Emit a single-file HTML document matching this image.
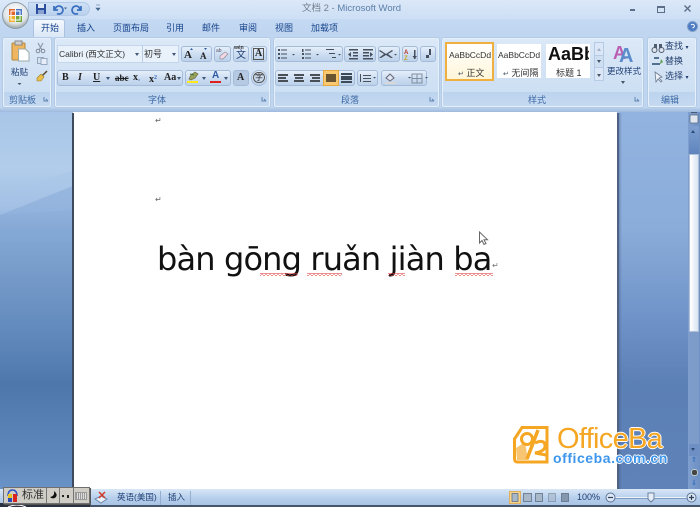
<!DOCTYPE html>
<html><head><meta charset="utf-8">
<style>
html,body{margin:0;padding:0}
body{width:700px;height:507px;overflow:hidden;position:relative;background:#fff;font-family:"Liberation Sans","Noto Sans CJK SC",sans-serif;}
.a,.t{position:absolute}
.t{white-space:nowrap;color:#15428b;font-size:9px;line-height:12px}
.k{color:#333}
.box{position:absolute;border:1px solid #a4bcd9;border-radius:3px;background:linear-gradient(#e6effa,#cfdff2 45%,#bcd1ea);box-sizing:border-box}
.grp{position:absolute;top:37px;height:71px;border:1px solid #b4cbe6;border-radius:3px;box-sizing:border-box;background:linear-gradient(#dbe8f7,#cddff3 78%,#bcd3ee 78%,#c6daf1);box-shadow:inset 0 0 0 1px #e6f0fb}
.gl{position:absolute;top:94px;text-align:center;font-size:9px;line-height:12px;color:#3e6aa5;white-space:nowrap}
.tab{position:absolute;top:22px;font-size:9px;line-height:12px;color:#15428b;white-space:nowrap}
.ic{position:absolute;font-size:9px;line-height:12px;color:#222;white-space:nowrap;text-align:center}
.sty{position:absolute;background:#fff;text-align:center;overflow:hidden;box-sizing:border-box}
.dd{position:absolute;border:2px solid transparent;border-top:3px solid #3f5777;border-bottom:0}
</style></head><body>

<!-- title -->
<div class="a" style="left:0;top:0;width:700px;height:19px;background:linear-gradient(#dbe8f8,#cddff5)"></div>
<div class="a" style="left:0;top:19px;width:700px;height:18px;background:linear-gradient(#c4d9f2,#bfd5f0)"></div>
<div class="a" style="left:0;top:35px;width:700px;height:74px;background:#bfd5f0"></div>
<div class="a" style="left:0;top:108px;width:700px;height:4px;background:linear-gradient(#bad0ec,#9db9dd)"></div>

<!-- QAT -->
<div class="a" style="left:28px;top:2px;width:62px;height:14px;border-radius:0 9px 9px 0;background:linear-gradient(#cfe0f5,#b9d1ee);border:1px solid #b3cae6;box-sizing:border-box"></div>
<svg class="a" style="left:0;top:0" width="105" height="36" viewBox="0 0 105 36">
 <defs><radialGradient id="o" cx="50%" cy="35%" r="65%"><stop offset="0" stop-color="#fff"/><stop offset=".7" stop-color="#dfe4e6"/><stop offset="1" stop-color="#9aa4a8"/></radialGradient></defs>
 <circle cx="15.500" cy="15.500" r="13" fill="url(#o)" stroke="#8a9aa6"/>
 <rect x="9" y="9" width="6" height="6" fill="#e2632b"/><rect x="16" y="9" width="6" height="6" fill="#4a78c4"/>
 <rect x="9" y="16" width="6" height="6" fill="#efb02e"/><rect x="16" y="16" width="6" height="6" fill="#74a93c"/>
 <rect x="11" y="11" width="9" height="9" fill="none" stroke="#fff" stroke-width="1"/>
 <rect x="36" y="4" width="10" height="10" fill="#2b4f9c"/><rect x="38" y="4" width="6" height="4" fill="#dfe8f5"/><rect x="38" y="10" width="6" height="4" fill="#8aa2cf"/>
 <path d="M54 6v4h4M55 9.500a4 4 0 1 1 2 4" fill="none" stroke="#3a6fc0" stroke-width="1.700"/>
 <path d="M64 7.500h3l-1.500 2z" fill="#45688f"/>
 <path d="M81 6v4h-4M80 9.500a4 4 0 1 0-2 4" fill="none" stroke="#3a6fc0" stroke-width="1.700"/>
 <path d="M96 5h4M96 8h4l-2 2.500z" fill="#45688f" stroke="#45688f" stroke-width=".6"/>
</svg>

<div class="t" style="left:302px;top:3px;font-size:9.500px;color:#75808e">文档 2 - <span style="color:#5a7fa8">Microsoft Word</span></div>
<div class="a" style="left:630px;top:9px;width:5px;height:2px;background:#5d6f88"></div>
<div class="a" style="left:657px;top:6px;width:6px;height:4px;border:1px solid #5d6f88;border-top-width:2px"></div>
<svg class="a" style="left:684px;top:5px" width="7" height="7"><path d="M.5.5l6 6M6.500.5l-6 6" stroke="#5d6f88" stroke-width="1.400"/></svg>
<svg class="a" style="left:687px;top:21px" width="11" height="11"><circle cx="5.500" cy="5.500" r="5" fill="#4d7cc5" stroke="#7f9fc9"/><path d="M4 4q1.500-1.500 3 0t-1.500 3" fill="none" stroke="#fff"/></svg>

<!-- Tabs -->
<div class="a" style="left:33px;top:19px;width:32px;height:18px;background:linear-gradient(#f4f9ff,#dbe8f7);border:1px solid #aac2df;border-bottom:0;border-radius:3px 3px 0 0;box-sizing:border-box"></div>
<div class="tab" style="left:41px">开始</div>
<div class="tab" style="left:77px">插入</div>
<div class="tab" style="left:113px">页面布局</div>
<div class="tab" style="left:166px">引用</div>
<div class="tab" style="left:202px">邮件</div>
<div class="tab" style="left:239px">审阅</div>
<div class="tab" style="left:275px">视图</div>
<div class="tab" style="left:311px">加载项</div>

<!-- Groups -->
<div class="grp" style="left:2px;width:50px"></div>
<div class="grp" style="left:54px;width:217px"></div>
<div class="grp" style="left:273px;width:167px"></div>
<div class="grp" style="left:441px;width:203px"></div>
<div class="grp" style="left:647px;width:50px"></div>
<div class="gl" style="left:9px">剪贴板</div>
<div class="gl" style="left:148px">字体</div>
<div class="gl" style="left:341px">段落</div>
<div class="gl" style="left:528px">样式</div>
<div class="gl" style="left:661px">编辑</div>

<!-- Clipboard -->
<svg class="a" style="left:9px;top:40px" width="46" height="50">
 <rect x="3" y="3" width="13" height="17" rx="1" fill="#efb65f" stroke="#b48536"/>
 <rect x="6" y="1" width="7" height="4" fill="#cfcfcf" stroke="#888"/>
 <path d="M9.500 9h7l3.500 3.500V21H9.500z" fill="#fff" stroke="#9aa"/>
 <path d="M29 3l4 7M34 3l-4 7" stroke="#8d99a8" stroke-width="1.200"/><circle cx="29" cy="11" r="1.800" fill="none" stroke="#7d8998"/><circle cx="34" cy="11" r="1.800" fill="none" stroke="#7d8998"/>
 <rect x="28.500" y="17.500" width="6" height="6" fill="#d7e2f0" stroke="#95a8c0"/><rect x="32" y="18.500" width="6" height="6" fill="#e8eef7" stroke="#95a8c0"/>
 <path d="M38 31l-5 5" stroke="#5e4a2a" stroke-width="1.500"/><path d="M28 38l4-4 3 3-3 4h-4z" fill="#e9c04d" stroke="#a07d25" stroke-width=".6"/>
 <path d="M8.500 43h4l-2 2z" fill="#456"/>
</svg>
<div class="ic" style="left:11px;top:66px;color:#1f3f74;font-size:8.500px">粘贴</div>
<svg class="a" style="left:43px;top:96px" width="6" height="6"><path d="M1 1v4h4M3 3l2 2" fill="none" stroke="#5f83b3"/></svg>

<!-- Font row 1 -->
<div class="a" style="left:57px;top:45px;width:122px;height:18px;background:#e9f1fb;border:1px solid #c3d6ec;box-sizing:border-box"></div>
<div class="a" style="left:142px;top:45px;width:1px;height:18px;background:#b8cde6"></div>
<div class="t k" style="left:59px;top:48px;font-size:8.500px">Calibri (西文正文)</div>
<div class="t k" style="left:144px;top:48px">初号</div>
<div class="dd" style="left:135px;top:53px"></div>
<div class="dd" style="left:172px;top:53px"></div>
<div class="box" style="left:181px;top:46px;width:31px;height:16px"></div>
<div class="ic" style="left:184px;top:49px;font-family:'Liberation Serif';font-weight:bold;font-size:11px">A</div>
<div class="ic" style="left:200px;top:50px;font-family:'Liberation Serif';font-weight:bold;font-size:9px">A</div>
<svg class="a" style="left:190px;top:47px" width="20" height="5"><path d="M0 3l1.500-2L3 3zM14 1h3l-1.500 2z" fill="#2f5da5"/></svg>
<div class="box" style="left:214px;top:46px;width:17px;height:16px"></div>
<svg class="a" style="left:215px;top:47px" width="15" height="14">
 <path d="M5 9l5-4 3 2-5 5H5z" fill="#f3d7e3" stroke="#8a8f9c" stroke-width=".7"/>
 <text x="1" y="5" font-size="5" fill="#556" font-family="Liberation Sans">ab</text>
</svg>
<div class="box" style="left:233px;top:46px;width:16px;height:16px"></div>
<div class="ic" style="left:234px;top:45px;font-size:5px;line-height:7px;color:#333;font-weight:bold">wén</div>
<div class="ic" style="left:236px;top:50px;color:#23427a;font-size:10px">文</div>
<div class="box" style="left:251px;top:46px;width:16px;height:16px"></div>
<div class="ic" style="left:253px;top:48px;font-family:'Liberation Serif';font-weight:bold;font-size:10px;border:1px solid #555;line-height:10px;padding:0 1px">A</div>

<!-- Font row 2 -->
<div class="box" style="left:57px;top:70px;width:126px;height:16px"></div>
<div class="ic" style="left:62px;top:72px;font-family:'Liberation Serif';font-weight:bold;font-size:10px">B</div>
<div class="ic" style="left:78px;top:72px;font-family:'Liberation Serif';font-style:italic;font-weight:bold;font-size:10px">I</div>
<div class="ic" style="left:93px;top:72px;font-family:'Liberation Serif';font-weight:bold;font-size:10px;text-decoration:underline">U</div>
<div class="dd" style="left:106px;top:77px"></div>
<div class="ic" style="left:115px;top:72px;font-family:'Liberation Serif';font-weight:bold;font-size:9px;text-decoration:line-through">abc</div>
<div class="ic" style="left:133px;top:72px;font-family:'Liberation Serif';font-weight:bold;font-size:10px">x<span style="font-size:6px;color:#3b6cc0">₂</span></div>
<div class="ic" style="left:149px;top:72px;font-family:'Liberation Serif';font-weight:bold;font-size:10px">x<span style="font-size:6px;color:#3b6cc0;vertical-align:3px">2</span></div>
<div class="ic" style="left:164px;top:72px;font-family:'Liberation Serif';font-weight:bold;font-size:10px">Aa</div>
<div class="dd" style="left:177px;top:77px"></div>
<div class="box" style="left:185px;top:70px;width:46px;height:16px"></div>
<svg class="a" style="left:187px;top:71px" width="12" height="10"><path d="M2 8l2-4 4-3 3 2-3 4-4 2z" fill="#9aa35a" stroke="#6a6a40" stroke-width=".7"/><path d="M3 3l4 1" stroke="#3d6b3a"/></svg>
<div class="a" style="left:187px;top:81px;width:11px;height:2px;background:#ffe81a"></div>
<div class="dd" style="left:202px;top:77px"></div>
<div class="ic" style="left:212px;top:70px;font-weight:bold;font-size:10px;color:#2d5aa5">A</div>
<div class="a" style="left:210px;top:81px;width:11px;height:2px;background:#e0201c"></div>
<div class="dd" style="left:224px;top:77px"></div>
<div class="box" style="left:233px;top:70px;width:16px;height:16px;background:#b5c9e2"></div>
<div class="ic" style="left:237px;top:72px;font-family:'Liberation Serif';font-weight:bold;font-size:10px">A</div>
<div class="box" style="left:251px;top:70px;width:16px;height:16px;border-radius:8px"></div>
<div class="ic" style="left:253px;top:72px;font-size:8px;border:1px solid #555;border-radius:6px;line-height:9px;padding:0 1px">字</div>
<svg class="a" style="left:261px;top:96px" width="6" height="6"><path d="M1 1v4h4M3 3l2 2" fill="none" stroke="#5f83b3"/></svg>

<!-- Paragraph row 1 -->
<div class="box" style="left:275px;top:46px;width:68px;height:16px"></div>
<div class="box" style="left:344px;top:46px;width:32px;height:16px"></div>
<div class="box" style="left:378px;top:46px;width:22px;height:16px"></div>
<div class="box" style="left:402px;top:46px;width:16px;height:16px"></div>
<div class="box" style="left:420px;top:46px;width:16px;height:16px"></div>
<svg class="a" style="left:273px;top:44px" width="167" height="45">
 <g fill="#454f5e">
 <path d="M5 5h2v2H5zM5 9h2v2H5zM5 13h2v2H5zM8 5.500h6v1H8zM8 9.500h6v1H8zM8 13.500h6v1H8z"/>
 <path d="M29 5h1.500v3H29zM29 9h2v2h-2zM29 13h2v2h-2zM32 5.500h6v1h-6zM32 9.500h6v1h-6zM32 13.500h6v1h-6z"/>
 <path d="M53 5h8v1h-8zM56 9h6v1h-6zM59 13h4v1h-4z"/>
 <path d="M76 5h9v1.500h-9zM80 8h5v1.500h-5zM80 11h5v1.500h-5zM76 14h9v1.500h-9zM78 8v5l-3-2.500z"/>
 <path d="M90 5h10v1.500H90zM90 8h6v1.500h-6zM90 11h6v1.500h-6zM90 14h10v1.500H90zM97 8v5l3-2.500z"/>
 <path d="M107 6l6 4 6-4 1 1-5 3 5 4h-2l-5-3-5 3h-2l5-4-5-3z"/>
 <path d="M141 6h1.500v9H141zM139.500 12h4.500l-2.300 3z"/>
 <path d="M156 5h2v6h-2zM153 11h3v3h-3z"/>
 </g>
 <path d="M19 10h3l-1.500 1.500zM43 10h3l-1.500 1.500zM65 10h3l-1.500 1.500zM121 10h3l-1.500 1.500z" fill="#456"/>
 <text x="131" y="10" font-size="6" font-weight="bold" fill="#b8352a" font-family="Liberation Sans">A</text>
 <text x="131" y="16" font-size="6" font-weight="bold" fill="#c9a020" font-family="Liberation Sans">Z</text>
</svg>

<!-- Paragraph row 2 -->
<div class="box" style="left:275px;top:70px;width:80px;height:16px"></div>
<div class="a" style="left:323px;top:70px;width:16px;height:16px;background:#f9c86f;box-sizing:border-box;border:1px solid #e8a840"></div>
<div class="box" style="left:357px;top:70px;width:21px;height:16px"></div>
<div class="box" style="left:381px;top:70px;width:46px;height:16px"></div>
<svg class="a" style="left:275px;top:70px" width="160" height="16">
 <g fill="#4a5058">
 <path d="M3 4h10v2H3zM3 7h8v2H3zM3 10h10v2H3z"/>
 <path d="M19 4h10v2H19zM20 7h8v2h-8zM19 10h10v2H19z"/>
 <path d="M35 4h10v2H35zM37 7h8v2h-8zM35 10h10v2H35z"/>
 <path d="M51 4h10v8H51z" fill="#6a5530"/>
 <path d="M66 3h11v2H66zM66 6h11v4H66zM66 11h11v2H66z" fill="#3d4a58"/>
 <path d="M88 5h8v1h-8zM88 8h8v1h-8zM88 11h8v1h-8zM85 4v8h1V4z"/>
 </g>
 <path d="M98 7h3l-1.500 1.500zM133 7h3l-1.500 1.500zM150 7h3l-1.500 1.500z" fill="#456"/>
 <path d="M111 8l4-4 4 4-4 3z" fill="#dfe8f4" stroke="#667"/>
 <rect x="110" y="12" width="11" height="2" fill="#d8d8d8"/>
 <path d="M137 4h10v9h-10zM137 8.500h10M142 4v9" fill="none" stroke="#7f8fa2"/>
</svg>
<svg class="a" style="left:429px;top:96px" width="6" height="6"><path d="M1 1v4h4M3 3l2 2" fill="none" stroke="#5f83b3"/></svg>

<!-- Styles -->
<div class="sty" style="left:445px;top:42px;width:49px;height:39px;border:2px solid #f0b040;background:linear-gradient(#fff,#fff6d8)"></div>
<div class="t k" style="left:449px;top:49px;font-size:8.500px">AaBbCcDd</div>
<div class="t k" style="left:458px;top:67px;font-size:9px"><span style="font-size:7px;color:#456">↵</span> 正文</div>
<div class="sty" style="left:497px;top:44px;width:44px;height:34px"></div>
<div class="t k" style="left:498px;top:49px;font-size:8.500px">AaBbCcDd</div>
<div class="t k" style="left:503px;top:67px;font-size:9px"><span style="font-size:7px;color:#456">↵</span> 无间隔</div>
<div class="sty" style="left:546px;top:44px;width:44px;height:34px"></div>
<div class="a" style="left:546px;top:42px;width:43px;height:24px;overflow:hidden"><div class="t" style="left:2px;top:2px;font-size:18px;line-height:20px;font-weight:bold;color:#111">AaBbC</div></div>
<div class="t k" style="left:556px;top:67px;font-size:9px">标题 1</div>
<div class="a" style="left:594px;top:42px;width:10px;height:39px;background:#dbe7f6;border:1px solid #b5cbe5;box-sizing:border-box"></div>
<div class="a" style="left:594px;top:55px;width:10px;height:13px;background:#cfdff2;border:1px solid #b5cbe5;box-sizing:border-box"></div>
<div class="a" style="left:597px;top:48px;border:2px solid transparent;border-bottom:3px solid #9fb0c6;border-top:0"></div>
<div class="a" style="left:597px;top:60px;border:2px solid transparent;border-top:3px solid #456;border-bottom:0"></div>
<div class="a" style="left:597px;top:74px;border:2px solid transparent;border-top:3px solid #456;border-bottom:0"></div>
<svg class="a" style="left:611px;top:41px" width="26" height="26">
 <text x="2" y="18" font-size="18" font-weight="bold" fill="#bb5fb3" font-family="Liberation Sans">A</text>
 <text x="8" y="21" font-size="20" font-weight="bold" fill="#5a8ccb" font-family="Liberation Sans">A</text>
</svg>
<div class="ic" style="left:607px;top:65px;color:#1f3f74;font-size:8.500px">更改样式</div>
<div class="a" style="left:621px;top:81px;border:2px solid transparent;border-top:3px solid #456;border-bottom:0"></div>
<svg class="a" style="left:634px;top:96px" width="6" height="6"><path d="M1 1v4h4M3 3l2 2" fill="none" stroke="#5f83b3"/></svg>

<!-- Editing -->
<svg class="a" style="left:651px;top:41px" width="14" height="44">
 <path d="M3 3h3v6H3zM8 3h3v6H8z" fill="#4e5c70"/><circle cx="3.500" cy="9" r="2.500" fill="#dfe5ee" stroke="#4e5c70"/><circle cx="10.500" cy="9" r="2.500" fill="#dfe5ee" stroke="#4e5c70"/>
 <path d="M3 17h5M1 23h8" stroke="#53708f" stroke-width="2"/><path d="M10 18l2 3-3 2z" fill="#5a9c4a"/>
 <path d="M4 31l1 10 2-3 3 3 1-1-3-3 3-1z" fill="#eef3fa" stroke="#6b7b8d" stroke-width=".8"/>
</svg>
<div class="t" style="left:665px;top:40px;color:#24406f">查找 <span style="font-size:6px">▾</span></div>
<div class="t" style="left:665px;top:55px;color:#24406f">替换</div>
<div class="t" style="left:665px;top:70px;color:#24406f">选择 <span style="font-size:6px">▾</span></div>

<!-- workspace -->
<div class="a" style="left:0;top:112px;width:73px;height:378px;background:linear-gradient(180deg,#a9c6e8 0,#b2cdeb 15%,#a3c0e4 24%,#86a9d5 31%,#5f87ba 60%,#4e78ac 72%,#5f88bd 92%,#6a93c8 100%)"></div>
<svg class="a" style="left:0;top:112px" width="73" height="130"><path d="M0 85L73 58v40L0 103z" fill="#a9c6e8" opacity=".45"/><path d="M0 103L73 74v56H0z" fill="#84a8d5" opacity=".5"/></svg>
<div class="a" style="left:617px;top:112px;width:83px;height:378px;background:linear-gradient(180deg,#92b3e0 0,#8badda 30%,#6f93c8 55%,#5b80b6 72%,#5f83b8 100%)"></div>
<div class="a" style="left:72px;top:113px;width:2px;height:377px;background:#3f4a5c"></div>
<div class="a" style="left:74px;top:113px;width:543px;height:377px;background:#fff"></div>
<div class="a" style="left:617px;top:113px;width:2px;height:377px;background:#4f6285"></div>
<div class="a" style="left:619px;top:113px;width:3px;height:377px;background:linear-gradient(90deg,rgba(60,80,120,.35),rgba(60,80,120,0))"></div>

<div class="t" style="left:155px;top:115px;font-size:8px;color:#666">↵</div>
<div class="t" style="left:155px;top:194px;font-size:8px;color:#666">↵</div>
<div class="t" style="left:157px;top:239px;font-family:'DejaVu Sans';font-size:32px;line-height:40px;color:#111;letter-spacing:-.85px">bàn gōng ruǎn jiàn ba</div>
<div class="t" style="left:492px;top:260px;font-size:8px;color:#777">↵</div>
<svg class="a" style="left:258px;top:272px" width="240" height="6">
 <defs><pattern id="sq" width="4" height="3" patternUnits="userSpaceOnUse"><path d="M0 2.500L2 .5L4 2.500" fill="none" stroke="#d83a3a" stroke-width=".8"/></pattern></defs>
 <rect x="2" y="1" width="38" height="3" fill="url(#sq)"/>
 <rect x="49" y="1" width="35" height="3" fill="url(#sq)"/>
 <rect x="130" y="1" width="17" height="3" fill="url(#sq)"/>
 <rect x="197" y="1" width="38" height="3" fill="url(#sq)"/>
</svg>
<svg class="a" style="left:478px;top:231px" width="12" height="15"><path d="M1.500 1v11l2.500-2.500 2 4 2-1-2-3.800h3.500z" fill="#fff" stroke="#666"/></svg>

<!-- scrollbar -->
<div class="a" style="left:688px;top:112px;width:12px;height:378px;background:linear-gradient(90deg,#7e9fce,#6d8fc2)"></div>
<svg class="a" style="left:689px;top:111px" width="11" height="14"><rect x="1" y="4" width="8" height="8" rx="1" fill="#dfe6ef" stroke="#5d6f88" stroke-width=".8"/><path d="M2 1.500h6" stroke="#4a5a70"/></svg>
<div class="a" style="left:689px;top:126px;width:10px;height:28px;background:linear-gradient(#7ea0d1,#5f85bd)"></div>
<div class="a" style="left:691px;top:130px;border:2.500px solid transparent;border-bottom:3px solid #2e4a74;border-top:0"></div>
<div class="a" style="left:689px;top:154px;width:10px;height:178px;background:linear-gradient(90deg,#fff,#d8e3f2);border:1px solid #aebfd8;box-sizing:border-box"></div>
<div class="a" style="left:689px;top:332px;width:10px;height:112px;background:#7e9cc9"></div>
<div class="a" style="left:689px;top:444px;width:10px;height:12px;background:#6d8fc4"></div>
<div class="a" style="left:691px;top:448px;border:2.500px solid transparent;border-top:3px solid #2e4a74;border-bottom:0"></div>
<div class="t" style="left:691px;top:455px;font-size:7px;color:#2a63c0">⇑</div>
<div class="a" style="left:691px;top:469px;width:5px;height:5px;border-radius:3px;background:#444;border:1px solid #bcc"></div>
<div class="t" style="left:691px;top:478px;font-size:7px;color:#2a63c0">⇓</div>

<!-- status -->
<div class="a" style="left:0;top:489px;width:700px;height:18px;background:linear-gradient(#d8e6f6,#b7cfec 50%,#a5c0e3)"></div>
<div class="a" style="left:0;top:505px;width:700px;height:2px;background:#46556c"></div>
<div class="a" style="left:90px;top:490px;width:1px;height:15px;background:#94aed0"></div>
<div class="a" style="left:160px;top:491px;width:1px;height:14px;background:#94aed0"></div>
<div class="a" style="left:190px;top:491px;width:1px;height:14px;background:#94aed0"></div>
<div class="t" style="left:117px;top:491px;font-size:8.500px;color:#1f3f74">英语(美国)</div>
<div class="t" style="left:168px;top:491px;font-size:8.500px;color:#1f3f74">插入</div>
<svg class="a" style="left:93px;top:490px" width="16" height="15"><path d="M2 9l6-3 6 3-6 4z" fill="#eaf0f8" stroke="#6f8bb0"/><path d="M6 2l6 6M12 2L6 8" stroke="#d23a2a" stroke-width="1.500"/></svg>

<!-- IME -->
<div class="a" style="left:0;top:503px;width:90px;height:4px;background:#2a3240"></div>
<svg class="a" style="left:6px;top:503px" width="22" height="4"><path d="M2 4q9-4 18 0" fill="none" stroke="#fff"/></svg>
<div class="a" style="left:3px;top:487px;width:87px;height:17px;background:#cfcdc6;border:1px solid #6f6f6f;box-sizing:border-box;box-shadow:1px 1px 0 #555"></div>
<svg class="a" style="left:6px;top:488px" width="13" height="15">
 <path d="M2 8Q2 2 6.500 2T11 8" fill="none" stroke="#2f55c9" stroke-width="1.500"/>
 <rect x="2" y="6" width="4" height="4" fill="#e8c520"/><rect x="7" y="6" width="4" height="4" fill="#d9251d"/>
 <rect x="2" y="10" width="4" height="4" fill="#2a49b8"/><rect x="7" y="10" width="4" height="4" fill="#d9251d"/>
</svg>
<div class="t" style="left:22px;top:488px;font-size:11px;line-height:15px;color:#333">标准</div>
<div class="a" style="left:46px;top:488px;width:1px;height:15px;background:#777"></div>
<svg class="a" style="left:48px;top:490px" width="10" height="11"><path d="M6 1q1 5-4 6 3 3 6 0 2-3-2-6z" fill="#111"/></svg>
<div class="a" style="left:59px;top:488px;width:1px;height:15px;background:#777"></div>
<div class="a" style="left:62px;top:495px;width:2px;height:2px;background:#222"></div>
<div class="a" style="left:67px;top:495px;width:2px;height:3px;background:#222"></div>
<div class="a" style="left:73px;top:488px;width:1px;height:15px;background:#777"></div>
<div class="a" style="left:75px;top:492px;width:12px;height:8px;background:repeating-linear-gradient(90deg,#999 0 1px,#ddd 1px 2px);border:1px solid #999;box-sizing:border-box"></div>

<!-- view controls -->
<div class="a" style="left:509px;top:491px;width:12px;height:13px;background:#f7d48a;border:1px solid #e0b060;box-sizing:border-box"></div>
<svg class="a" style="left:509px;top:490px" width="66" height="15"><g fill="#a9b8c9" stroke="#5f7186" stroke-width=".8"><rect x="3" y="3.500" width="6" height="8"/><rect x="14.500" y="3.500" width="8" height="8"/><rect x="26.500" y="3.500" width="7" height="8"/><rect x="39.500" y="3.500" width="7" height="8" opacity=".6"/><rect x="52.500" y="3.500" width="7" height="8" fill="#8497ad"/></g></svg>
<div class="t" style="left:577px;top:491px;font-size:9px;color:#1f3f74">100%</div>
<div class="a" style="left:613px;top:497px;width:75px;height:1px;background:#eef3fa;box-shadow:0 1px 0 #7f9bc2"></div>
<svg class="a" style="left:604px;top:490px" width="96" height="15">
 <circle cx="6.500" cy="7.500" r="4.500" fill="#dce7f5" stroke="#5b7396"/><path d="M4 7.500h5" stroke="#2d3f58" stroke-width="1.200"/>
 <circle cx="87.500" cy="7.500" r="4.500" fill="#dce7f5" stroke="#5b7396"/><path d="M85 7.500h5M87.500 5v5" stroke="#2d3f58" stroke-width="1.200"/>
 <path d="M44 3h6v6l-3 3-3-3z" fill="#e5edf7" stroke="#6c82a2"/>
</svg>

<!-- Watermark -->
<svg class="a" style="left:510px;top:424px" width="40" height="41" viewBox="0 0 40 41">
 <path d="M12 3.500H37V38H7Q4.500 38 4.500 34V15z" fill="#fff" stroke="#f5a623" stroke-width="3"/>
 <path d="M6 24l9-6 3 18H7z" fill="#f8c672"/>
 <circle cx="17" cy="15" r="5.500" fill="#fff" stroke="#f5a623" stroke-width="3"/>
 <path d="M28 6L17 35" stroke="#f5a623" stroke-width="3.500"/>
 <path d="M25 19q9-4 10 2t-10 8l11 2" fill="none" stroke="#f5a623" stroke-width="3"/>
</svg>
<div class="t" style="left:557px;top:423px;font-size:29px;line-height:32px;color:#f5a623;letter-spacing:-.7px;text-shadow:1px 0 0 #fff,-1px 0 0 #fff,0 1px 0 #fff,0 -1px 0 #fff">OfficeBa</div>
<div class="t" style="left:553px;top:450px;font-size:14px;line-height:16px;font-weight:bold;color:#3d96ee;letter-spacing:.55px;text-shadow:1px 0 0 #fff,-1px 0 0 #fff,0 1px 0 #fff,0 -1px 0 #fff">officeba.com.cn</div>

</body></html>
